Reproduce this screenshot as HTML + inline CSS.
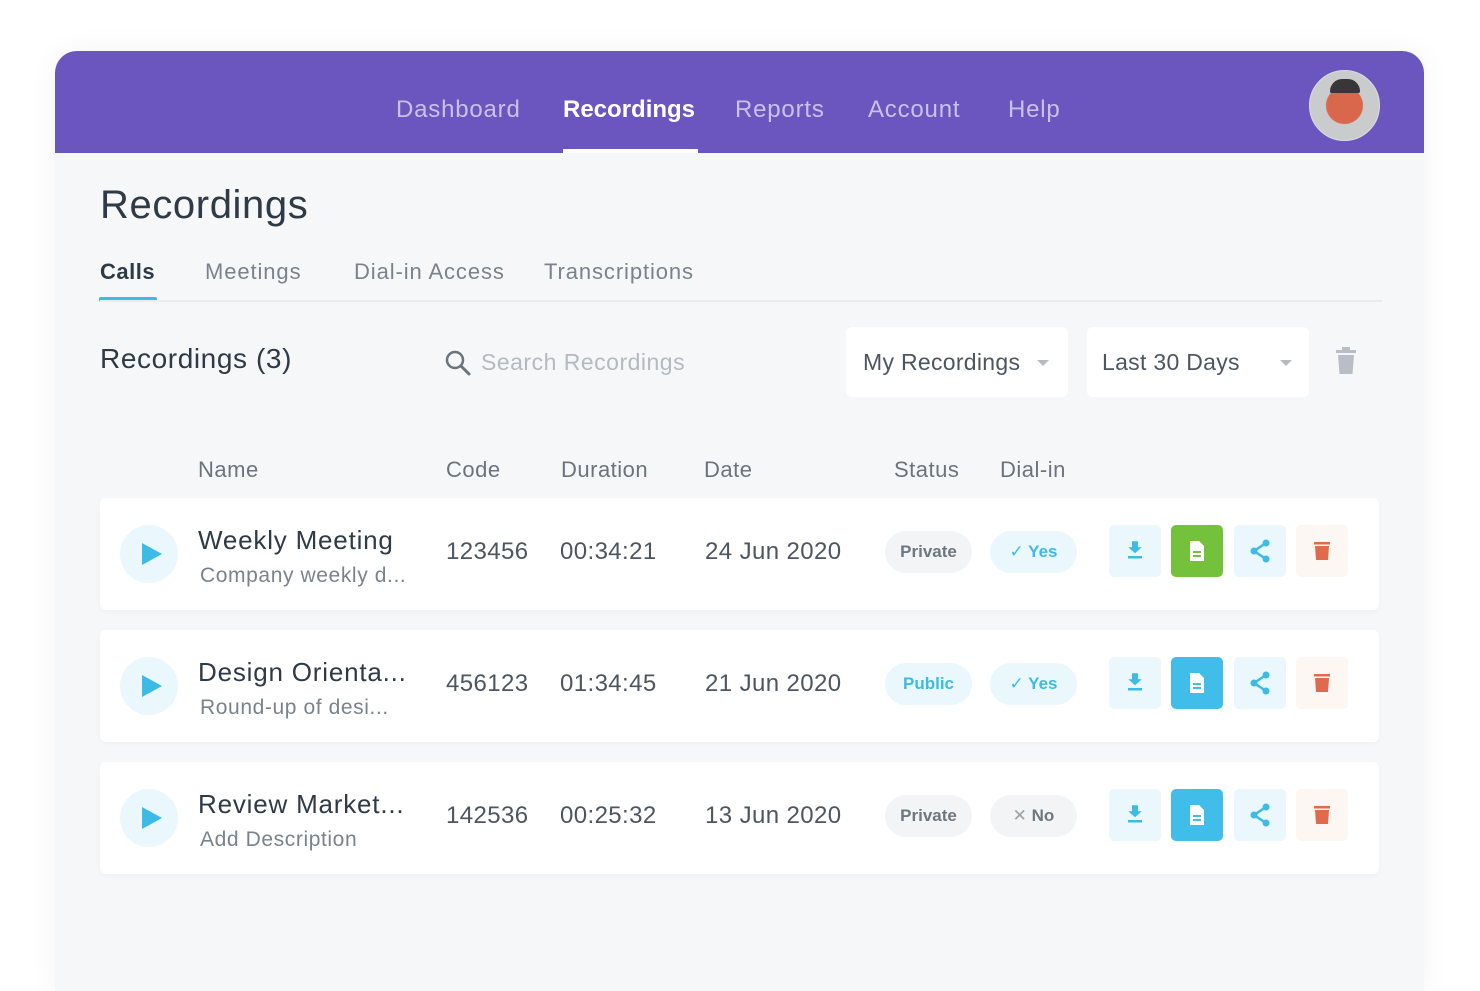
<!DOCTYPE html>
<html><head><style>
*{margin:0;padding:0;box-sizing:border-box}
body{width:1480px;height:976px;background:#fff;font-family:"Liberation Sans",sans-serif;position:relative;overflow:hidden}
.a{position:absolute}
.card{left:55px;top:51px;width:1369px;height:940px;background:#f6f7f9;border-radius:22px 22px 0 0;overflow:hidden;box-shadow:0 0 30px rgba(0,0,0,0.05)}
.hdr{left:0;top:0;width:1369px;height:102px;background:#6b56bf}
.nav{top:45px;font-size:24px;color:#c9c1ea;letter-spacing:.8px}
.row{left:100px;width:1279px;height:112px;background:#fff;border-radius:6px;box-shadow:0 2px 6px rgba(0,0,0,0.03)}
.play{left:20px;top:27px;width:58px;height:58px;border-radius:50%;background:#eaf7fc}
.play:after{content:"";position:absolute;left:22px;top:18px;border-left:20px solid #3dbbe5;border-top:11px solid transparent;border-bottom:11px solid transparent}
.t{font-size:26px;color:#2e3a45;top:27px;left:98px;letter-spacing:.8px}
.s{font-size:21px;color:#7a838c;top:66px;left:100px;letter-spacing:.6px}
.c{font-size:24px;color:#4d5660;top:40px;letter-spacing:.4px}
.pill{top:33px;height:42px;width:87px;border-radius:21px;background:#f3f4f6;font-size:17px;font-weight:bold;color:#6e7780;text-align:center;line-height:42px}
.btn{top:27px;width:52px;height:52px;border-radius:5px;background:#eaf7fd}
.btn svg{position:absolute;left:14px;top:14px}
.th{top:457px;font-size:22px;color:#6b737c;letter-spacing:.5px}
.tab{top:259px;font-size:22px;color:#7a838c;letter-spacing:.9px}
</style></head><body>
<div class="a card">
 <div class="a hdr">
  <div class="a nav" style="left:341px">Dashboard</div>
  <div class="a nav" style="left:508px;color:#fff;font-weight:bold;letter-spacing:0">Recordings</div>
  <div class="a" style="left:508px;top:98px;width:135px;height:4px;background:#fff"></div>
  <div class="a nav" style="left:680px">Reports</div>
  <div class="a nav" style="left:813px">Account</div>
  <div class="a nav" style="left:953px">Help</div>
  <div class="a" style="left:1254px;top:19px;width:71px;height:71px;border-radius:50%;background:radial-gradient(circle at 50% 50%,#d9674b 0 18px,#c9cbcc 19px);border:1px solid #ddd"></div>
  <div class="a" style="left:1275px;top:28px;width:30px;height:14px;border-radius:14px 14px 2px 2px;background:#3a3536"></div>
 </div>
</div>
<div class="a" style="left:100px;top:183px;font-size:40px;color:#2e3a45;letter-spacing:.6px">Recordings</div>
<div class="a" style="left:100px;top:259px;font-size:22px;color:#2e3a45;font-weight:bold;letter-spacing:.5px">Calls</div>
<div class="a" style="left:99px;top:297px;width:58px;height:5px;background:#3dbbe5;border-radius:2px"></div>
<div class="a tab" style="left:205px">Meetings</div>
<div class="a tab" style="left:354px">Dial-in Access</div>
<div class="a tab" style="left:544px">Transcriptions</div>
<div class="a" style="left:100px;top:300px;width:1282px;height:2px;background:#eaecef"></div>
<div class="a" style="left:100px;top:343px;font-size:28px;color:#2e3a45;letter-spacing:.6px">Recordings (3)</div>
<svg class="a" style="left:445px;top:350px" width="26" height="26" viewBox="0 0 26 26"><circle cx="10" cy="10" r="8" fill="none" stroke="#6b737c" stroke-width="2.5"/><path d="M16 16l8 8" stroke="#6b737c" stroke-width="3" stroke-linecap="round"/></svg>
<div class="a" style="left:481px;top:349px;font-size:23px;color:#b4bac0;letter-spacing:.5px">Search Recordings</div>
<div class="a" style="left:846px;top:327px;width:222px;height:70px;background:#fff;border-radius:6px"></div>
<div class="a" style="left:863px;top:349px;font-size:23px;color:#4d5660;letter-spacing:.3px">My Recordings</div>
<div class="a" style="left:1037px;top:360px;border-top:6px solid #b4bac0;border-left:6px solid transparent;border-right:6px solid transparent"></div>
<div class="a" style="left:1087px;top:327px;width:222px;height:70px;background:#fff;border-radius:6px"></div>
<div class="a" style="left:1102px;top:349px;font-size:23px;color:#4d5660;letter-spacing:.3px">Last 30 Days</div>
<div class="a" style="left:1280px;top:360px;border-top:6px solid #b4bac0;border-left:6px solid transparent;border-right:6px solid transparent"></div>
<svg class="a" style="left:1335px;top:347px" width="22" height="28" viewBox="0 0 22 28"><rect x="1" y="3" width="20" height="3" fill="#b9bdc6"/><rect x="7" y="0" width="8" height="3" fill="#b9bdc6"/><path d="M3 8h16l-1.5 19h-13z" fill="#b9bdc6"/></svg>
<div class="a th" style="left:198px">Name</div>
<div class="a th" style="left:446px">Code</div>
<div class="a th" style="left:561px">Duration</div>
<div class="a th" style="left:704px">Date</div>
<div class="a th" style="left:894px">Status</div>
<div class="a th" style="left:1000px">Dial-in</div>

<div class="a row" style="top:498px">
 <div class="a play"></div>
 <div class="a t">Weekly Meeting</div><div class="a s">Company weekly d...</div>
 <div class="a c" style="left:346px">123456</div><div class="a c" style="left:460px">00:34:21</div><div class="a c" style="left:605px">24 Jun 2020</div>
 <div class="a pill" style="left:785px">Private</div>
 <div class="a pill" style="left:890px;background:#eaf7fd;color:#3dbbe5"><span style="font-weight:normal">✓</span> Yes</div>
 <div class="a btn" style="left:1009px"><svg width="24" height="24"><path d="M8 3h8v8h5l-9 8-9-8h5z" fill="#3dbbe5" transform="translate(3,0) scale(.75)"/><rect x="5" y="17" width="14" height="2.5" fill="#3dbbe5"/></svg></div>
 <div class="a btn" style="left:1071px;background:#74c23c"><svg width="24" height="24"><path d="M5 2h9l5 5v15H5z" fill="#fff"/><rect x="8" y="12" width="8" height="2" fill="#74c23c"/><rect x="8" y="16" width="8" height="2" fill="#74c23c"/></svg></div>
 <div class="a btn" style="left:1134px"><svg width="24" height="24"><path d="M18 4L6 12l12 8" fill="none" stroke="#3dbbe5" stroke-width="2.5"/><circle cx="18" cy="4" r="3.5" fill="#3dbbe5"/><circle cx="6" cy="12" r="3.5" fill="#3dbbe5"/><circle cx="18" cy="20" r="3.5" fill="#3dbbe5"/></svg></div>
 <div class="a btn" style="left:1196px;background:#fdf7f4"><svg width="24" height="24"><rect x="4" y="3" width="16" height="2.5" fill="#e06a4e"/><path d="M5 7h14l-1 14H6z" fill="#e06a4e"/></svg></div>
</div>
<div class="a row" style="top:630px">
 <div class="a play"></div>
 <div class="a t">Design Orienta...</div><div class="a s">Round-up of desi...</div>
 <div class="a c" style="left:346px">456123</div><div class="a c" style="left:460px">01:34:45</div><div class="a c" style="left:605px">21 Jun 2020</div>
 <div class="a pill" style="left:785px;background:#eaf7fd;color:#3dbbe5">Public</div>
 <div class="a pill" style="left:890px;background:#eaf7fd;color:#3dbbe5"><span style="font-weight:normal">✓</span> Yes</div>
 <div class="a btn" style="left:1009px"><svg width="24" height="24"><path d="M8 3h8v8h5l-9 8-9-8h5z" fill="#3dbbe5" transform="translate(3,0) scale(.75)"/><rect x="5" y="17" width="14" height="2.5" fill="#3dbbe5"/></svg></div>
 <div class="a btn" style="left:1071px;background:#40bde8"><svg width="24" height="24"><path d="M5 2h9l5 5v15H5z" fill="#fff"/><rect x="8" y="12" width="8" height="2" fill="#40bde8"/><rect x="8" y="16" width="8" height="2" fill="#40bde8"/></svg></div>
 <div class="a btn" style="left:1134px"><svg width="24" height="24"><path d="M18 4L6 12l12 8" fill="none" stroke="#3dbbe5" stroke-width="2.5"/><circle cx="18" cy="4" r="3.5" fill="#3dbbe5"/><circle cx="6" cy="12" r="3.5" fill="#3dbbe5"/><circle cx="18" cy="20" r="3.5" fill="#3dbbe5"/></svg></div>
 <div class="a btn" style="left:1196px;background:#fdf7f4"><svg width="24" height="24"><rect x="4" y="3" width="16" height="2.5" fill="#e06a4e"/><path d="M5 7h14l-1 14H6z" fill="#e06a4e"/></svg></div>
</div>
<div class="a row" style="top:762px">
 <div class="a play"></div>
 <div class="a t">Review Market...</div><div class="a s">Add Description</div>
 <div class="a c" style="left:346px">142536</div><div class="a c" style="left:460px">00:25:32</div><div class="a c" style="left:605px">13 Jun 2020</div>
 <div class="a pill" style="left:785px">Private</div>
 <div class="a pill" style="left:890px"><span style="font-weight:normal;color:#9aa1a8">✕</span> No</div>
 <div class="a btn" style="left:1009px"><svg width="24" height="24"><path d="M8 3h8v8h5l-9 8-9-8h5z" fill="#3dbbe5" transform="translate(3,0) scale(.75)"/><rect x="5" y="17" width="14" height="2.5" fill="#3dbbe5"/></svg></div>
 <div class="a btn" style="left:1071px;background:#40bde8"><svg width="24" height="24"><path d="M5 2h9l5 5v15H5z" fill="#fff"/><rect x="8" y="12" width="8" height="2" fill="#40bde8"/><rect x="8" y="16" width="8" height="2" fill="#40bde8"/></svg></div>
 <div class="a btn" style="left:1134px"><svg width="24" height="24"><path d="M18 4L6 12l12 8" fill="none" stroke="#3dbbe5" stroke-width="2.5"/><circle cx="18" cy="4" r="3.5" fill="#3dbbe5"/><circle cx="6" cy="12" r="3.5" fill="#3dbbe5"/><circle cx="18" cy="20" r="3.5" fill="#3dbbe5"/></svg></div>
 <div class="a btn" style="left:1196px;background:#fdf7f4"><svg width="24" height="24"><rect x="4" y="3" width="16" height="2.5" fill="#e06a4e"/><path d="M5 7h14l-1 14H6z" fill="#e06a4e"/></svg></div>
</div>
</body></html>
